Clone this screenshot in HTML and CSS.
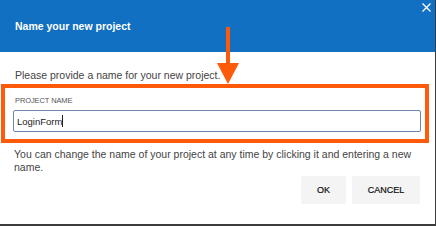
FILE: index.html
```html
<!DOCTYPE html>
<html>
<head>
<meta charset="utf-8">
<link rel="stylesheet" href="styles.css">
</head>
<body>
<div class="dialog">
  <div class="header">
    <h1 class="title">Name your new project</h1>
    <svg class="close" width="9" height="9" viewBox="0 0 9 9"><path d="M0.5 0.5L8.5 8.5M8.5 0.5L0.5 8.5" stroke="#fff" stroke-width="1.3" fill="none"/></svg>
  </div>
  <div class="content">
    <p class="intro">Please provide a name for your new project.</p>
    <label class="label">PROJECT NAME</label>
    <div class="input"><span>LoginForm</span><span class="caret"></span></div>
    <p class="help">You can change the name of your project at any time by clicking it and entering a new name.</p>
    <div class="actions">
      <button class="btn">OK</button>
      <button class="btn btn-wide">CANCEL</button>
    </div>
  </div>
  <div class="highlight"></div>
  <div class="arrow-line"></div>
  <div class="arrow-head"></div>
</div>
</body>
</html>
```
FILE: styles.css
```css
html, body {
  margin: 0;
  padding: 0;
}
body {
  width: 436px;
  height: 226px;
  background: #3c3c3c;
  font-family: "Liberation Sans", Arial, sans-serif;
  overflow: hidden;
}
.dialog {
  position: relative;
  width: 435px;
  height: 224px;
  background: #fff;
  display: flex;
  flex-direction: column;
}
.header {
  height: 52px;
  background: #1170c1;
  display: flex;
  align-items: center;
  padding-left: 15px;
  position: relative;
}
.title {
  margin: 0;
  color: #fff;
  font-size: 10.5px;
  font-weight: bold;
  line-height: 13px;
}
.close {
  position: absolute;
  top: 3px;
  right: 4px;
}
.content {
  padding: 17px 15px 0 15px;
  display: flex;
  flex-direction: column;
}
.intro {
  margin: 0;
  font-size: 10.5px;
  line-height: 13px;
  color: #444;
}
.label {
  margin-top: 14px;
  font-size: 7.5px;
  line-height: 10px;
  color: #555;
  letter-spacing: -0.1px;
}
.input {
  margin-top: 4px;
  margin-left: -2px;
  margin-right: -1px;
  height: 20px;
  border: 1px solid #6d86ad;
  border-radius: 2px;
  display: flex;
  align-items: center;
  padding-left: 3px;
  font-size: 9.5px;
  color: #222;
}
.caret {
  display: inline-block;
  width: 1px;
  height: 12px;
  background: #222;
  margin-left: 0;
}
.help {
  margin: 16px 0 0 -1px;
  font-size: 10.5px;
  line-height: 13px;
  color: #444;
}
.actions {
  display: flex;
  justify-content: flex-end;
  gap: 6px;
  margin-top: 2px;
}
.btn {
  width: 45px;
  height: 28px;
  border: none;
  border-radius: 2px;
  background: #f4f4f4;
  font-family: "Liberation Sans", Arial, sans-serif;
  font-size: 9px;
  color: #111;
  padding: 0;
  -webkit-text-stroke: 0.2px #111;
}
.btn-wide {
  width: 68px;
}
.highlight {
  position: absolute;
  left: 1px;
  top: 84px;
  width: 420px;
  height: 51px;
  border: 4px solid #ff5a0a;
}
.arrow-line {
  position: absolute;
  left: 226px;
  top: 27px;
  width: 4px;
  height: 38px;
  background: #ff5a0a;
}
.arrow-head {
  position: absolute;
  left: 217px;
  top: 63px;
  width: 0;
  height: 0;
  border-left: 11px solid transparent;
  border-right: 11px solid transparent;
  border-top: 21px solid #ff5a0a;
}
```
